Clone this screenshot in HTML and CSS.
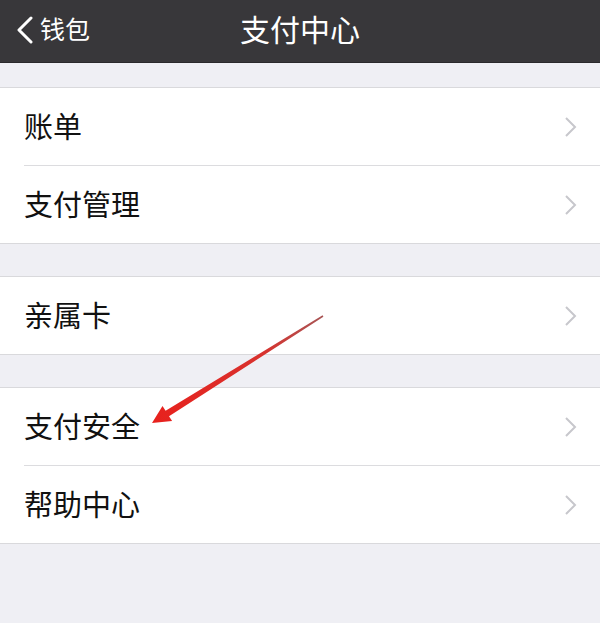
FILE: index.html
```html
<!DOCTYPE html>
<html lang="zh-CN">
<head>
<meta charset="utf-8">
<title>支付中心</title>
<link rel="stylesheet" href="styles.css">
</head>
<body>
<div class="screen">
  <header class="nav">
    <div class="back">
      <svg class="back-icon" width="18" height="28" viewBox="0 0 18 28"><polyline points="15,2 3,14 15,26" fill="none" stroke="#fff" stroke-width="3" stroke-linecap="round" stroke-linejoin="round"/></svg>
      <span class="back-text">钱包</span>
    </div>
    <h1 class="title">支付中心</h1>
  </header>
  <div class="gap gap-top"></div>
  <section class="group">
    <div class="row"><span class="label">账单</span><svg class="chev" width="14" height="22" viewBox="0 0 14 22"><polyline points="2,2 11,11 2,20" fill="none" stroke="#c7c7cc" stroke-width="2"/></svg></div>
    <div class="row"><span class="label">支付管理</span><svg class="chev" width="14" height="22" viewBox="0 0 14 22"><polyline points="2,2 11,11 2,20" fill="none" stroke="#c7c7cc" stroke-width="2"/></svg></div>
  </section>
  <div class="gap"></div>
  <section class="group">
    <div class="row"><span class="label">亲属卡</span><svg class="chev" width="14" height="22" viewBox="0 0 14 22"><polyline points="2,2 11,11 2,20" fill="none" stroke="#c7c7cc" stroke-width="2"/></svg></div>
  </section>
  <div class="gap"></div>
  <section class="group">
    <div class="row"><span class="label">支付安全</span><svg class="chev" width="14" height="22" viewBox="0 0 14 22"><polyline points="2,2 11,11 2,20" fill="none" stroke="#c7c7cc" stroke-width="2"/></svg></div>
    <div class="row"><span class="label">帮助中心</span><svg class="chev" width="14" height="22" viewBox="0 0 14 22"><polyline points="2,2 11,11 2,20" fill="none" stroke="#c7c7cc" stroke-width="2"/></svg></div>
  </section>
  <svg class="arrow" width="600" height="623" viewBox="0 0 600 623">
    <defs>
      <linearGradient id="ag" gradientUnits="userSpaceOnUse" x1="323" y1="316" x2="152" y2="423">
        <stop offset="0" stop-color="#a85555"/>
        <stop offset="0.35" stop-color="#d8322e"/>
        <stop offset="1" stop-color="#e8211d"/>
      </linearGradient>
    </defs>
    <polygon points="322.6,315.3 165.6,410.8 162.5,405.9 152,423 172.1,421.1 169.0,416.2 323.4,316.7" fill="url(#ag)"/>
  </svg>
</div>
</body>
</html>
```
FILE: styles.css
```css
html, body {
  margin: 0;
  padding: 0;
}
body {
  background: #efeff4;
  font-family: "Noto Sans CJK SC", "Noto Sans", sans-serif;
}
.screen {
  position: relative;
  width: 600px;
  height: 623px;
  overflow: hidden;
  background: #efeff4;
}
.nav {
  position: relative;
  height: 62px;
  background: #38373a;
  border-bottom: 1px solid #2a292c;
  display: flex;
  align-items: center;
  justify-content: center;
}
.back {
  position: absolute;
  left: 16px;
  top: 0;
  height: 62px;
  display: flex;
  align-items: center;
  gap: 6px;
}
.back-icon {
  display: block;
  margin-top: -2px;
}
.back-text {
  color: #fff;
  font-size: 25px;
  line-height: 1;
  margin-top: -6px;
}
.title {
  margin: 0;
  color: #fff;
  font-size: 30px;
  font-weight: 400;
  line-height: 1;
  margin-top: -6px;
}
.gap {
  height: 32px;
}
.gap-top {
  height: 24px;
}
.group {
  background: #fff;
  border-top: 1px solid #d9d9dc;
  border-bottom: 1px solid #d9d9dc;
}
.row {
  height: 77px;
  display: flex;
  align-items: center;
  justify-content: space-between;
  padding: 0 22px 0 24px;
}
.row + .row {
  border-top: 1px solid #dcdcdf;
  margin-left: 24px;
  padding-left: 0;
}
.label {
  font-size: 29px;
  line-height: 1;
  color: #111;
  margin-top: -2px;
}
.chev {
  display: block;
}
.arrow {
  position: absolute;
  left: 0;
  top: 0;
  pointer-events: none;
}
```
